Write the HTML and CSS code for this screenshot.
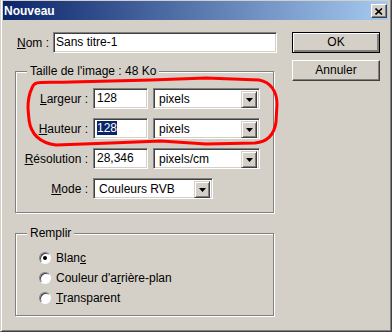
FILE: index.html
```html
<!DOCTYPE html>
<html lang="fr">
<head>
    <meta charset="UTF-8">
    <title>Nouveau</title>
    <link rel="stylesheet" href="styles.css">
</head>
<body>
    <div class="dialog">
        <!-- Title bar -->
        <div class="titlebar">
            <span class="title">Nouveau</span>
            <span class="close">
                <svg width="8" height="7" viewBox="0 0 8 7"><path d="M0.5 0.5 L7 6.5 M7 0.5 L0.5 6.5" stroke="#000" stroke-width="1.6" fill="none"/></svg>
            </span>
        </div>

        <div class="content">
            <div class="main">
                <div class="name-row">
                    <label class="name-label"><u>N</u>om :</label>
                    <div class="field name-field">Sans titre-1</div>
                </div>

                <!-- Image size -->
                <div class="group size-group">
                    <span class="group-title">Taille de l'image : 48 Ko</span>
                    <div class="form-row">
                        <label class="row-label"><u>L</u>argeur :</label>
                        <div class="field num-field">128</div>
                        <div class="field select unit-select"><span>pixels</span><span class="drop"><svg width="7" height="4" viewBox="0 0 7 4"><path d="M0 0 H7 L3.5 4 Z" fill="#000"/></svg></span></div>
                    </div>
                    <div class="form-row">
                        <label class="row-label"><u>H</u>auteur :</label>
                        <div class="field num-field"><span class="selected">128</span></div>
                        <div class="field select unit-select"><span>pixels</span><span class="drop"><svg width="7" height="4" viewBox="0 0 7 4"><path d="M0 0 H7 L3.5 4 Z" fill="#000"/></svg></span></div>
                    </div>
                    <div class="form-row">
                        <label class="row-label"><u>R</u>ésolution :</label>
                        <div class="field num-field">28,346</div>
                        <div class="field select unit-select"><span>pixels/cm</span><span class="drop"><svg width="7" height="4" viewBox="0 0 7 4"><path d="M0 0 H7 L3.5 4 Z" fill="#000"/></svg></span></div>
                    </div>
                    <div class="form-row">
                        <label class="row-label"><u>M</u>ode :</label>
                        <div class="field select mode-select"><span>Couleurs RVB</span><span class="drop"><svg width="7" height="4" viewBox="0 0 7 4"><path d="M0 0 H7 L3.5 4 Z" fill="#000"/></svg></span></div>
                    </div>
                </div>

                <!-- Fill -->
                <div class="group fill-group">
                    <span class="group-title">Remplir</span>
                    <div class="radio-row"><span class="radio checked"></span><span>Blan<u>c</u></span></div>
                    <div class="radio-row"><span class="radio"></span><span>Couleur d'a<u>r</u>rière-plan</span></div>
                    <div class="radio-row"><span class="radio"></span><span><u>T</u>ransparent</span></div>
                </div>
            </div>

            <div class="buttons">
                <div class="btn btn-default">OK</div>
                <div class="btn">Annuler</div>
            </div>
        </div>

        <!-- Hand-drawn red mark -->
        <svg class="mark" width="392" height="332" viewBox="0 0 392 332">
            <path d="M31 88 C33 80 40 83 70 82 L150 80 L205 78 L258 80 C270 82 276 92 276 104 L275 122 C273 136 266 142 254 143 L205 144 L160 141 L110 143 L55 145 C40 143 30 135 28 120 L27 108 C27 98 29 92 31 88 Z" fill="none" stroke="#ff0000" stroke-width="3"/>
        </svg>
    </div>
</body>
</html>
```

FILE: styles.css
```css
/* General Styles */
body {
    margin: 0;
    font-family: 'Liberation Sans', Arial, sans-serif;
    font-size: 12px;
    color: #000;
    background: #d4d0c8;
}

.dialog {
    position: relative;
    width: 392px;
    height: 332px;
    box-sizing: border-box;
    background: #d4d0c8;
    border-left: 1px solid #d4d0c8;
    border-right: 1px solid #404040;
    border-bottom: 1px solid #404040;
    box-shadow: inset 1px 0 #fff, inset -1px -1px #808080;
    padding: 1px 3px 0 2px;
}

/* Title bar */
.titlebar {
    height: 19px;
    background: linear-gradient(90deg, #0a246a, #a6caf0);
    display: flex;
    justify-content: space-between;
    align-items: center;
    padding: 0 1px 0 1px;
}

.title {
    color: #fff;
    font-weight: 700;
    font-size: 12px;
}

.close {
    width: 16px;
    height: 14px;
    box-sizing: border-box;
    background: #d4d0c8;
    border: 1px solid;
    border-color: #fff #404040 #404040 #fff;
    box-shadow: inset -1px -1px #808080;
    display: flex;
    align-items: center;
    justify-content: center;
    margin-top: 1px;
}

/* Layout */
.content {
    display: flex;
    padding-left: 12px;
}

.main {
    width: 260px;
    flex-shrink: 0;
}

.name-row {
    display: flex;
    align-items: center;
    margin-top: 12px;
    padding-left: 2px;
    height: 21px;
}

.name-label {
    width: 36px;
    flex-shrink: 0;
}

/* Sunken fields */
.field {
    height: 21px;
    box-sizing: border-box;
    background: #fff;
    border: 1px solid;
    border-color: #808080 #fff #fff #808080;
    box-shadow: inset 1px 1px #404040, inset -1px -1px #d4d0c8;
    padding: 1px 0 0 2px;
    line-height: 17px;
    flex-shrink: 0;
    white-space: nowrap;
}

.name-field {
    width: 224px;
}

.num-field {
    width: 55px;
    padding-left: 3px;
}

.selected {
    background: #0a246a;
    color: #fff;
}

.select {
    display: flex;
    justify-content: space-between;
    padding: 2px 2px 0 5px;
}

.unit-select {
    width: 107px;
    margin-left: 5px;
}

.mode-select {
    width: 120px;
}

.drop {
    width: 16px;
    height: 17px;
    box-sizing: border-box;
    background: #d4d0c8;
    border: 1px solid;
    border-color: #d4d0c8 #404040 #404040 #d4d0c8;
    box-shadow: inset 1px 1px #fff, inset -1px -1px #808080;
    display: flex;
    align-items: center;
    justify-content: center;
}

/* Group boxes */
.group {
    position: relative;
    box-sizing: border-box;
    width: 259px;
    border: 1px solid #808080;
    box-shadow: inset 1px 1px #fff, 1px 1px #fff;
}

.group-title {
    position: absolute;
    top: -8px;
    left: 11px;
    padding: 0 3px;
    line-height: 14px;
    background: #d4d0c8;
}

.size-group {
    margin-top: 18px;
    padding: 16px 0 13px 0;
    display: flex;
    flex-direction: column;
    gap: 9px;
}

.form-row {
    display: flex;
    align-items: center;
    height: 21px;
}

.row-label {
    width: 72px;
    margin-right: 5px;
    text-align: right;
    flex-shrink: 0;
}

.fill-group {
    margin-top: 20px;
    padding: 14px 0 7px 23px;
}

.radio-row {
    display: flex;
    align-items: center;
    gap: 5px;
    height: 20px;
}

.radio {
    width: 12px;
    height: 12px;
    box-sizing: border-box;
    border-radius: 50%;
    background: #fff;
    border: 1px solid;
    border-color: #808080 #fff #fff #808080;
    box-shadow: inset 1px 1px #404040;
    position: relative;
}

.radio.checked::after {
    content: "";
    position: absolute;
    left: 3px;
    top: 3px;
    width: 4px;
    height: 4px;
    border-radius: 50%;
    background: #000;
}

/* Buttons */
.buttons {
    margin-left: 17px;
    margin-top: 12px;
    display: flex;
    flex-direction: column;
    gap: 7px;
}

.btn {
    width: 88px;
    height: 21px;
    box-sizing: border-box;
    background: #d4d0c8;
    border: 1px solid;
    border-color: #fff #404040 #404040 #fff;
    box-shadow: inset -1px -1px #808080;
    text-align: center;
    line-height: 19px;
}

.btn-default {
    border: 1px solid #000;
    box-shadow: inset 1px 1px #fff, inset -2px -2px #808080, inset -1px -1px #404040;
}

.mark {
    position: absolute;
    top: 0;
    left: 0;
    pointer-events: none;
}
```
